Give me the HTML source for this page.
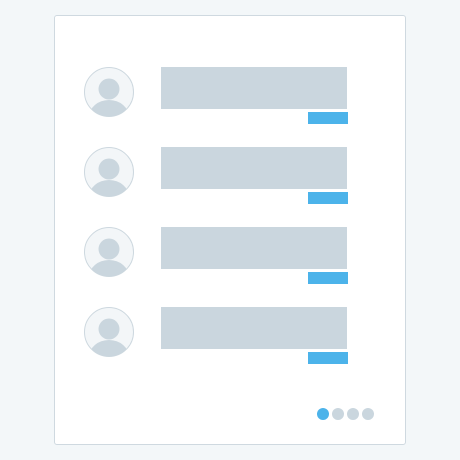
<!DOCTYPE html><html><head><style>
body{margin:0;width:460px;height:460px;background:#f3f7f9;position:relative;overflow:hidden}
.card{position:absolute;left:54px;top:15px;width:350px;height:428px;background:#fff;border:1px solid #cfd9e0;border-radius:3px}
.bar{position:absolute;left:161px;width:186px;height:42px;background:#cad6de}
.blue{position:absolute;left:308px;width:40px;height:12px;background:#4cb3ea}
svg{position:absolute;left:84px}
.dot{position:absolute;top:408px;width:12px;height:12px;border-radius:50%;background:#cad6de}
</style></head><body>
<div class="card"></div>
<svg style="top:67px" width="50" height="50"><defs><clipPath id="c"><circle cx="25" cy="25" r="24.5"/></clipPath></defs><circle cx="25" cy="25" r="24.5" fill="#f3f6f8" stroke="#cdd8df"/><g clip-path="url(#c)" fill="#cad6de"><circle cx="25" cy="22" r="10.5"/><ellipse cx="25" cy="50" rx="20" ry="17"/></g></svg>
<svg style="top:147px" width="50" height="50"><circle cx="25" cy="25" r="24.5" fill="#f3f6f8" stroke="#cdd8df"/><g clip-path="url(#c)" fill="#cad6de"><circle cx="25" cy="22" r="10.5"/><ellipse cx="25" cy="50" rx="20" ry="17"/></g></svg>
<svg style="top:227px" width="50" height="50"><circle cx="25" cy="25" r="24.5" fill="#f3f6f8" stroke="#cdd8df"/><g clip-path="url(#c)" fill="#cad6de"><circle cx="25" cy="22" r="10.5"/><ellipse cx="25" cy="50" rx="20" ry="17"/></g></svg>
<svg style="top:307px" width="50" height="50"><circle cx="25" cy="25" r="24.5" fill="#f3f6f8" stroke="#cdd8df"/><g clip-path="url(#c)" fill="#cad6de"><circle cx="25" cy="22" r="10.5"/><ellipse cx="25" cy="50" rx="20" ry="17"/></g></svg>
<div class="bar" style="top:67px"></div><div class="blue" style="top:112px"></div>
<div class="bar" style="top:147px"></div><div class="blue" style="top:192px"></div>
<div class="bar" style="top:227px"></div><div class="blue" style="top:272px"></div>
<div class="bar" style="top:307px"></div><div class="blue" style="top:352px"></div>
<div class="dot" style="left:317px;background:#4cb3ea"></div>
<div class="dot" style="left:332px"></div>
<div class="dot" style="left:347px"></div>
<div class="dot" style="left:362px"></div>
</body></html>
